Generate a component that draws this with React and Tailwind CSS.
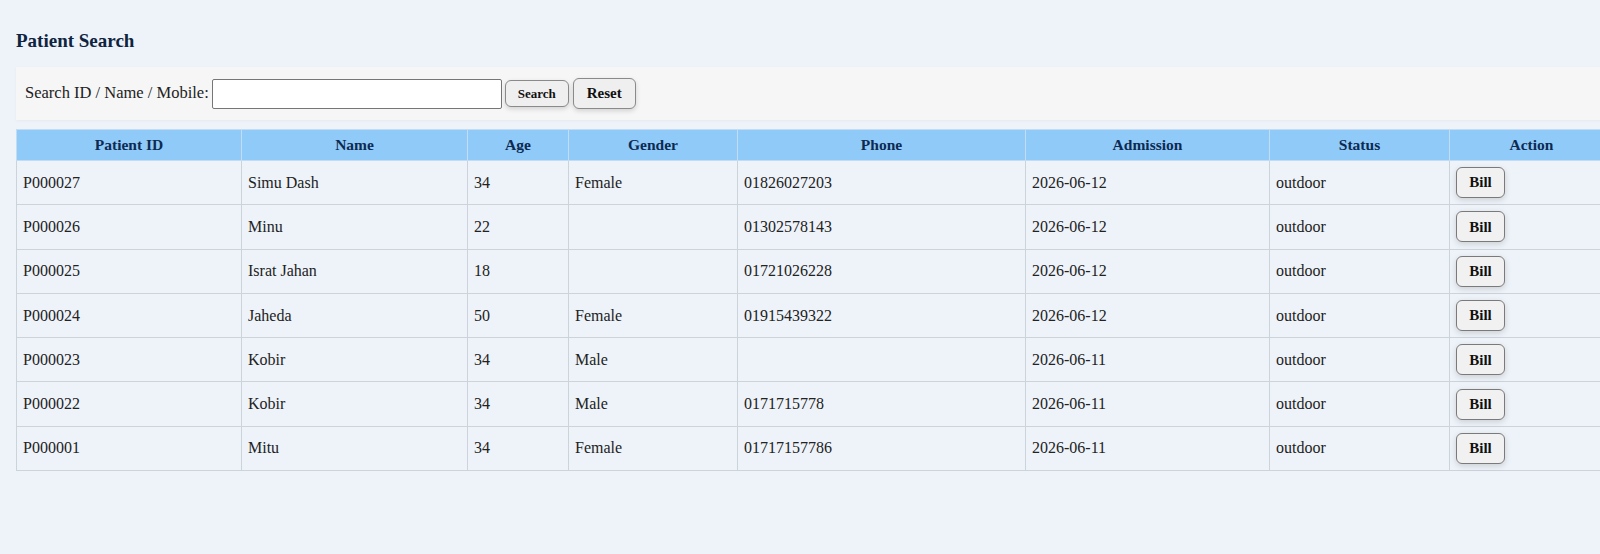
const patients = [
  { id: 'P000027', name: 'Simu Dash', age: '34', gender: 'Female', phone: '01826027203', date: '2026-06-12', status: 'outdoor' },
  { id: 'P000026', name: 'Minu', age: '22', gender: '', phone: '01302578143', date: '2026-06-12', status: 'outdoor' },
  { id: 'P000025', name: 'Israt Jahan', age: '18', gender: '', phone: '01721026228', date: '2026-06-12', status: 'outdoor' },
  { id: 'P000024', name: 'Jaheda', age: '50', gender: 'Female', phone: '01915439322', date: '2026-06-12', status: 'outdoor' },
  { id: 'P000023', name: 'Kobir', age: '34', gender: 'Male', phone: '', date: '2026-06-11', status: 'outdoor' },
  { id: 'P000022', name: 'Kobir', age: '34', gender: 'Male', phone: '0171715778', date: '2026-06-11', status: 'outdoor' },
  { id: 'P000001', name: 'Mitu', age: '34', gender: 'Female', phone: '01717157786', date: '2026-06-11', status: 'outdoor' },
];

const headers = ['Patient ID', 'Name', 'Age', 'Gender', 'Phone', 'Admission', 'Status', 'Action'];

export default function App() {
  return (
    <div className="min-h-screen w-full overflow-hidden bg-[#eef3f9] font-['Liberation_Serif',serif] text-[#222]">
      <div className="w-[1640px] pl-4 pt-[29px]">
        <h2 className="text-[19px] font-bold leading-6 text-[#0e2440]">Patient Search</h2>

        <div className="mt-[14px] flex h-[53px] w-[1620px] items-center bg-[#f6f6f6] pl-[9px] shadow-[0_1px_3px_rgba(0,0,0,0.04)]">
          <label className="text-[16.5px] text-[#222]">Search ID / Name / Mobile:</label>
          <input
            type="text"
            className="ml-[3px] h-[30px] w-[290px] rounded-[2px] border border-[#767676] bg-white px-1 outline-none"
          />
          <button className="ml-[3px] h-[27px] w-[64px] rounded-[6px] border border-[#8a8a8a] bg-[#efefef] text-[13px] font-bold text-[#111] shadow-[0_2px_5px_rgba(0,0,0,0.15)]">
            Search
          </button>
          <button className="ml-[4px] h-[31px] w-[63px] rounded-[6px] border border-[#8a8a8a] bg-[#efefef] text-[15px] font-bold text-[#111] shadow-[0_2px_5px_rgba(0,0,0,0.15)]">
            Reset
          </button>
        </div>

        <table className="mt-[9px] w-[1597px] table-fixed border-collapse">
          <colgroup>
            <col className="w-[225px]" />
            <col className="w-[226px]" />
            <col className="w-[101px]" />
            <col className="w-[169px]" />
            <col className="w-[288px]" />
            <col className="w-[244px]" />
            <col className="w-[180px]" />
            <col className="w-[164px]" />
          </colgroup>
          <thead>
            <tr className="h-[31px] bg-[#90caf9]">
              {headers.map(h => (
                <th key={h} className="border border-[#c3dcf3] px-[6px] text-center text-[15.5px] font-bold text-[#0d2b52]">
                  {h}
                </th>
              ))}
            </tr>
          </thead>
          <tbody>
            {patients.map(p => (
              <tr key={p.id} className="h-[44.3px] bg-[#eef3f9]">
                <td className="border border-[#cdd3da] px-[6px] text-[16px]">{p.id}</td>
                <td className="border border-[#cdd3da] px-[6px] text-[16px]">{p.name}</td>
                <td className="border border-[#cdd3da] px-[6px] text-[16px]">{p.age}</td>
                <td className="border border-[#cdd3da] px-[6px] text-[16px]">{p.gender}</td>
                <td className="border border-[#cdd3da] px-[6px] text-[16px]">{p.phone}</td>
                <td className="border border-[#cdd3da] px-[6px] text-[16px]">{p.date}</td>
                <td className="border border-[#cdd3da] px-[6px] text-[16px]">{p.status}</td>
                <td className="border border-[#cdd3da] px-[6px]">
                  <button className="h-[31px] w-[49px] rounded-[6px] border border-[#7a7a7a] bg-[#f1f1f1] text-[15px] font-bold text-[#111] shadow-[0_2px_6px_rgba(0,0,0,0.15)]">
                    Bill
                  </button>
                </td>
              </tr>
            ))}
          </tbody>
        </table>
      </div>
    </div>
  );
}
